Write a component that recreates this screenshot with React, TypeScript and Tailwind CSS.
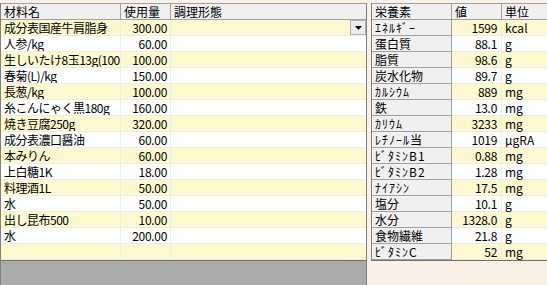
import React from 'react';

interface Ingredient {
  name: string;
  amount: string;
}

interface Nutrient {
  name: string;
  value: string;
  unit: string;
}

const ingredients: Ingredient[] = [
  { name: '成分表国産牛肩脂身', amount: '300.00' },
  { name: '人参/kg', amount: '60.00' },
  { name: '生しいたけ8玉13g(100', amount: '100.00' },
  { name: '春菊(L)/kg', amount: '150.00' },
  { name: '長葱/kg', amount: '100.00' },
  { name: '糸こんにゃく黒180g', amount: '160.00' },
  { name: '焼き豆腐250g', amount: '320.00' },
  { name: '成分表濃口醤油', amount: '60.00' },
  { name: '本みりん', amount: '60.00' },
  { name: '上白糖1K', amount: '18.00' },
  { name: '料理酒1L', amount: '50.00' },
  { name: '水', amount: '50.00' },
  { name: '出し昆布500', amount: '10.00' },
  { name: '水', amount: '200.00' },
  { name: '', amount: '' },
];

const nutrients: Nutrient[] = [
  { name: 'ｴﾈﾙｷﾞｰ', value: '1599', unit: 'kcal' },
  { name: '蛋白質', value: '88.1', unit: 'g' },
  { name: '脂質', value: '98.6', unit: 'g' },
  { name: '炭水化物', value: '89.7', unit: 'g' },
  { name: 'ｶﾙｼｳﾑ', value: '889', unit: 'mg' },
  { name: '鉄', value: '13.0', unit: 'mg' },
  { name: 'ｶﾘｳﾑ', value: '3233', unit: 'mg' },
  { name: 'ﾚﾁﾉｰﾙ当', value: '1019', unit: 'μgRA' },
  { name: 'ﾋﾞﾀﾐﾝB1', value: '0.88', unit: 'mg' },
  { name: 'ﾋﾞﾀﾐﾝB2', value: '1.28', unit: 'mg' },
  { name: 'ﾅｲｱｼﾝ', value: '17.5', unit: 'mg' },
  { name: '塩分', value: '10.1', unit: 'g' },
  { name: '水分', value: '1328.0', unit: 'g' },
  { name: '食物繊維', value: '21.8', unit: 'g' },
  { name: 'ﾋﾞﾀﾐﾝC', value: '52', unit: 'mg' },
];

const rowBg = (i: number) => (i % 2 === 0 ? 'bg-[#fef8d0]' : 'bg-white');

// half-width katakana reads narrower than the original bitmap font, so space it out
const isHalfKana = (s: string) => /[\uFF61-\uFF9F]/.test(s);

export default function App() {
  return (
    <div
      className="w-[547px] h-[285px] bg-[#faf0e6] flex items-start gap-[4px] pt-[3px] overflow-hidden text-[12px] leading-[15px] text-black"
      style={{ fontFamily: '"Noto Sans CJK JP", "Noto Sans", sans-serif' }}
    >
      {/* ingredient grid */}
      <div className="w-[367px] h-[282px] flex flex-col bg-[#ababab] border-l border-r border-[#808080]">
        <div className="flex h-[17px] bg-[#f0f0f0] border-t border-b border-[#a0a0a0] shrink-0">
          <div className="w-[120px] px-[3px] border-r border-[#a0a0a0]">材料名</div>
          <div className="w-[50px] px-[3px] border-r border-[#a0a0a0]">使用量</div>
          <div className="flex-1 px-[3px]">調理形態</div>
        </div>
        {ingredients.map((item, i) => (
          <div key={i} className={`flex h-[16px] border-b border-[#ececec] shrink-0 ${rowBg(i)}`}>
            <div className="w-[120px] pl-[3px] border-r border-[#ececec] whitespace-nowrap overflow-hidden tracking-[-0.5px]">{item.name}</div>
            <div className="w-[50px] px-[3px] border-r border-[#ececec] text-right tracking-[-0.3px]">{item.amount}</div>
            <div className="flex-1 flex justify-end">
              {i === 0 && (
                <div className="w-[16px] h-[15px] bg-[#ececec] border border-[#b5b5b5] flex items-center justify-center">
                  <svg width="7" height="4" viewBox="0 0 7 4">
                    <path d="M0 0H7L3.5 4Z" fill="#000" />
                  </svg>
                </div>
              )}
            </div>
          </div>
        ))}
        <div className="h-px bg-[#707070] shrink-0" />
      </div>

      {/* nutrient grid */}
      <div className="flex-1 flex flex-col border-l border-[#808080]">
        <div className="flex h-[17px] bg-[#f0f0f0] border-t border-b border-[#a0a0a0]">
          <div className="w-[80px] px-[3px] border-r border-[#a0a0a0]">栄養素</div>
          <div className="w-[50px] px-[3px] border-r border-[#a0a0a0]">値</div>
          <div className="flex-1 px-[3px]">単位</div>
        </div>
        {nutrients.map((n, i) => (
          <div key={i} className={`flex h-[16px] ${rowBg(i)}`}>
            <div
              className={`w-[80px] px-[3px] bg-[#f0f0f0] border-r border-b border-[#a0a0a0] whitespace-nowrap ${
                isHalfKana(n.name) ? 'tracking-[1px]' : ''
              }`}
            >
              {n.name}
            </div>
            <div className="w-[50px] px-[4px] border-r border-b border-[#ececec] text-right tracking-[-0.3px]">{n.value}</div>
            <div className="flex-1 px-[3px] border-b border-[#ececec]">{n.unit}</div>
          </div>
        ))}
        <div className="h-px bg-[#707070]" />
      </div>
    </div>
  );
}
